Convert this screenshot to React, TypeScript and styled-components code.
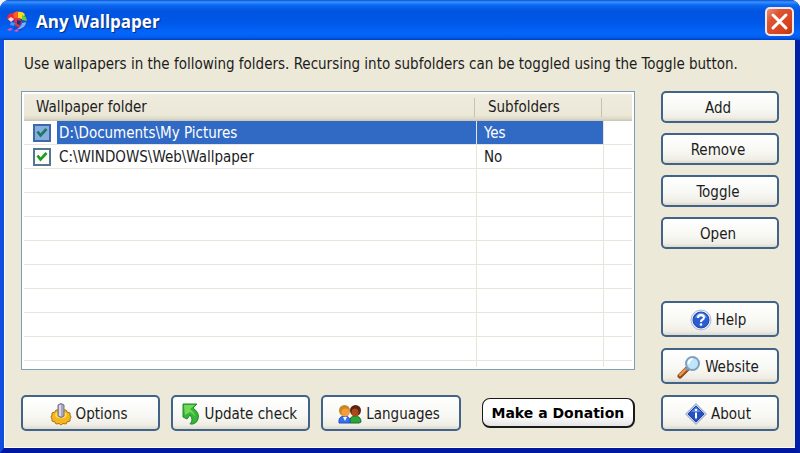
import React, { useState } from "react";
import styled, { createGlobalStyle, css } from "styled-components";

const ink = "#1c1c1c";
const face = "#ece9d8";
const uiFont = `"DejaVu Sans Condensed", "Noto Sans", sans-serif`;

const GlobalStyle = createGlobalStyle`
  *, *::before, *::after { box-sizing: border-box; }
  body { margin: 0; background: #f3f5ee; }
  button, input { font: inherit; color: inherit; }
`;

const Window = styled.main`
  min-height: 100vh;
  display: flex;
  flex-direction: column;
  border: solid;
  border-width: 0 5px 5px 4px;
  border-color: #0020a8 #0020a8 #0018a0 #0f4fe0;
  border-radius: 9px 9px 0 0;
  background: #0020a8;
  color: ${ink};
  font: 15px/20px ${uiFont};
`;

const TitleBar = styled.header`
  height: 40px;
  margin: 0 -5px 0 -4px;
  display: flex;
  align-items: center;
  gap: 7px;
  padding: 3px 6px 0 5px;
  border-radius: 9px 9px 0 0;
  background: linear-gradient(
    180deg,
    #0a50cf 0,
    #3b93ff 2px,
    #0a69f2 5px,
    #0054e0 11px,
    #0057e8 22px,
    #0466fb 33px,
    #0360f2 37px,
    #0040c4 40px
  );
`;

const Title = styled.h1`
  flex: 1;
  margin: 0;
  color: #fff;
  font: bold 17px/24px "Open Sans", "Noto Sans", sans-serif;
  text-shadow: 1px 1px 1px #0a2a80;
`;

const CloseButton = styled.button`
  width: 29px;
  height: 29px;
  padding: 0;
  display: grid;
  place-items: center;
  border: 2px solid #f1e8ee;
  border-radius: 5px;
  background: linear-gradient(135deg, #ee8d6c 0, #dd5433 30%, #d6421c 75%, #b83812 100%);
`;

const Client = styled.div`
  flex: 1;
  padding: 14px 16px 16px 16px;
  border: solid #f8fbff;
  border-width: 0 0 1px 1px;
  background: ${face};
`;

const Intro = styled.p`
  margin: 0 0 17px;
  padding-left: 3px;
`;

const Columns = styled.div`
  display: grid;
  grid-template-columns: 1fr 118px;
  gap: 26px;
`;

const Main = styled.section`
  display: flex;
  flex-direction: column;
  gap: 25px;
  min-width: 0;
`;

const Side = styled.aside`
  display: flex;
  flex-direction: column;
  justify-content: space-between;
`;

const Stack = styled.div<{ $gap: number }>`
  display: flex;
  flex-direction: column;
  gap: ${(p) => p.$gap}px;
`;

const ListFrame = styled.div`
  padding: 2px;
  border: 1px solid #7f9db9;
  background: #fff;
`;

const FolderTable = styled.table`
  width: 100%;
  table-layout: fixed;
  border-collapse: separate;
  border-spacing: 0;
`;

const FolderCol = styled.col``;
const SubfolderCol = styled.col`
  width: 127px;
`;
const SpareCol = styled.col`
  width: 28px;
`;

const HeadCell = styled.th`
  height: 27px;
  padding: 0;
  background: linear-gradient(180deg, #efecdf 0, #ebe8d8 21px, #dcd8c6 25px, #c9c5b4 27px);
  font-weight: normal;
  text-align: left;
`;

const HeadLabel = styled.div<{ $indent: number }>`
  margin-right: 2px;
  padding-left: ${(p) => p.$indent}px;
  border-right: 1px solid #c5c2b0;
  line-height: 19px;
`;

const Cell = styled.td<{ $short?: boolean }>`
  height: ${(p) => (p.$short ? 6 : 24)}px;
  padding: 0;
  border: solid #e8e6dc;
  border-width: 0 1px ${(p) => (p.$short ? 0 : 1)}px 0;
  &:last-child {
    border-right: 0;
  }
`;

const CellLine = styled.div`
  display: flex;
  align-items: center;
  gap: 6px;
  padding-left: 9px;
`;

const CellText = styled.div<{ $selected: boolean; $indent: number }>`
  flex: 1;
  padding-top: 2px;
  padding-left: ${(p) => p.$indent}px;
  line-height: 21px;
  white-space: nowrap;
  ${(p) =>
    p.$selected &&
    css`
      background: #316ac5;
      color: #fff;
    `}
`;

const Tick = styled.label<{ $selected: boolean }>`
  display: grid;
  width: 18px;
  height: 18px;
  > * {
    grid-area: 1 / 1;
  }
  input {
    appearance: none;
    width: 18px;
    height: 18px;
    margin: 0;
    border: 2px solid ${(p) => (p.$selected ? "#3d6aa6" : "#55768f")};
    background: ${(p) => (p.$selected ? "#88aede" : "#fbfdf8")};
  }
  svg {
    place-self: center;
    pointer-events: none;
    color: ${(p) => (p.$selected ? "#1d7868" : "#219b21")};
  }
  input:not(:checked) + svg {
    visibility: hidden;
  }
`;

const PushButton = styled.button<{ $tall?: boolean }>`
  height: ${(p) => (p.$tall ? 36 : 32)}px;
  display: flex;
  align-items: center;
  justify-content: center;
  gap: 4px;
  padding: 2px 4px 0 0;
  border: 2px solid #41638a;
  border-radius: 5px;
  background: linear-gradient(180deg, #fff 0, #f7f7f3 60%, #efede4 88%, #dcd8cc 100%);
  white-space: nowrap;
`;

const Footer = styled.div`
  display: grid;
  grid-template-columns: repeat(3, 139fr) 163fr;
  column-gap: 11px;
  align-items: center;
`;

const DonateButton = styled.button`
  height: 30px;
  margin-left: 10px;
  padding: 0;
  border: solid #1a1a1a;
  border-width: 1px 2px 2px 1px;
  border-radius: 8px;
  background: linear-gradient(180deg, #fff 60%, #e4e4e4 100%);
  color: #000;
  font: bold 14px/20px "DejaVu Sans", sans-serif;
  white-space: nowrap;
`;

const AppIcon = () => (
  <svg width="24" height="24" viewBox="0 0 24 24" aria-hidden="true">
    <path d="M6 9q3-7 11-6 6 2 5 9-1 7-8 9-5 0-6-4 6-1 4-4z" fill="#1b49c8" />
    <path d="M2 9q0-6 6-6l4 2-1 4-5 3z" fill="#e02a3c" />
    <path d="M8 4q3-4 6-2l-1 7-4-1z" fill="#ff5a1c" />
    <path d="M13 2q5-1 7 3l-3 4-4-1z" fill="#ffd91e" />
    <path d="M17 5l4 2 1 4-5-1z" fill="#63cd3c" />
    <path d="M9 9l5-1 3 4-3 6-4-3z" fill="#df3246" />
    <path d="M12 10l4 1-1 4-3-1z" fill="#16337f" />
    <path d="M3 9l3-2 3 2-3 3z" fill="#ffd5dc" />
    <path d="M6 12l4 1-1 3-4-1z" fill="#3d9bea" />
    <path d="M17 13l4-1q0 4-4 6-3 2-5 1 4-2 5-6z" fill="#70b4ff" />
    <path d="M2 20l3-2 3 1-3 2zM9 21l3-2 2 1-2 2z" fill="#d858b8" />
  </svg>
);

const CloseIcon = () => (
  <svg width="19" height="19" viewBox="0 0 19 19" aria-hidden="true">
    <path d="M3 3l13 13M16 3L3 16" stroke="#fff" strokeWidth="3" strokeLinecap="round" />
  </svg>
);

const TickIcon = () => (
  <svg width="12" height="12" viewBox="0 0 12 12" aria-hidden="true">
    <path d="M1.500 4.500L4.500 8.500L10.500 2" fill="none" stroke="currentColor" strokeWidth="2.700" />
  </svg>
);

const OptionsIcon = () => (
  <svg width="22" height="24" viewBox="0 0 22 24" aria-hidden="true">
    <path
      d="M2 11l3-1 1-2h10l1 2 3 1v2l1 2-1 2v2l-3 1-1 2-3-.5-2 1.500-2-1.500-3 .5-1-2-3-1v-2l-1-2 1-2z"
      fill="#f4b51f"
      stroke="#ad7115"
    />
    <ellipse cx="11" cy="13" rx="6" ry="3.500" fill="#ffdc4e" />
    <path d="M8 3q3-3 6 0v11q-3 3-6 0z" fill="#a9a6bd" stroke="#716e85" />
    <path d="M10 3v11" stroke="#e9e8f2" strokeWidth="1.500" />
  </svg>
);

const UpdateIcon = () => (
  <svg width="20" height="24" viewBox="0 0 20 24" aria-hidden="true">
    <path
      d="M2 2h14l-4 4q7 5 5 11-1 4-5 5H9q4-4 0-9l-3 4-4-2z"
      fill="#37b53a"
      stroke="#208a29"
      strokeLinejoin="round"
    />
    <path d="M3 3h11L9 7q5 4 5 8-2-4-5-5l-5 3z" fill="#73d957" />
  </svg>
);

const PeopleIcon = () => (
  <svg width="24" height="22" viewBox="0 0 24 22" aria-hidden="true">
    <path d="M12 20q-1-7 5-7 6 0 6 6l-2 1z" fill="#28a83a" stroke="#1a6c29" />
    <circle cx="17.500" cy="7.500" r="5.500" fill="#5b2311" />
    <ellipse cx="17" cy="9.500" rx="3.500" ry="4" fill="#a8481c" />
    <path d="M1 20q-1-7 6-7 5 0 5 6v1z" fill="#3672ef" stroke="#234fc0" />
    <path d="M5 14l2 4 2-4z" fill="#fff" />
    <circle cx="6.500" cy="7.500" r="5.500" fill="#c58920" />
    <ellipse cx="7.500" cy="9.500" rx="4" ry="4" fill="#f59c3c" />
  </svg>
);

const HelpIcon = () => (
  <svg width="22" height="22" viewBox="0 0 22 22" aria-hidden="true">
    <circle cx="11" cy="11" r="10" fill="#e9effa" stroke="#a9badb" />
    <circle cx="11" cy="11" r="8" fill="#2a5ed0" stroke="#2148a8" />
    <path d="M5 9q2-5 6-5t6 5q-6-2-12 0z" fill="#6f9df0" />
    <path d="M8 9q0-3 3-3 3 0 3 2.500 0 1.500-2 2.500-1 .5-1 2" fill="none" stroke="#fff" strokeWidth="2" />
    <circle cx="11" cy="15.500" r="1.300" fill="#fff" />
  </svg>
);

const MagnifierIcon = () => (
  <svg width="24" height="24" viewBox="0 0 24 24" aria-hidden="true">
    <path d="M3 21l7-7" stroke="#8f4a1a" strokeWidth="5" strokeLinecap="round" />
    <path d="M3 20l6-6" stroke="#ee9446" strokeWidth="2.500" strokeLinecap="round" />
    <path d="M9 15l3-3" stroke="#8495a8" strokeWidth="3" />
    <circle cx="15.500" cy="8.500" r="6.500" fill="#bfe5fa" stroke="#7e9fbe" strokeWidth="2" />
    <path d="M11.500 9q0-4 4-5" fill="none" stroke="#fff" strokeWidth="2" />
  </svg>
);

const AboutIcon = () => (
  <svg width="22" height="22" viewBox="0 0 22 22" aria-hidden="true">
    <path d="M11 1l10 10-10 10L1 11z" fill="#e6edfa" stroke="#a4b5d8" strokeWidth="1.500" strokeLinejoin="round" />
    <path d="M11 3l8 8-8 8-8-8z" fill="#2450c0" stroke="#1c3fa0" strokeLinejoin="round" />
    <path d="M11 4l5 5H6z" fill="#5c8ae6" />
    <path d="M11 6v2M11 9.500v6" stroke="#fff" strokeWidth="2" />
  </svg>
);

const initialFolders = [
  { path: "D:\\Documents\\My Pictures", subfolders: "Yes", selected: true, enabled: true },
  { path: "C:\\WINDOWS\\Web\\Wallpaper", subfolders: "No", selected: false, enabled: true },
];

const emptyRows = [0, 1, 2, 3, 4, 5, 6, 7, 8];

export default function App() {
  const [folders, setFolders] = useState(initialFolders);
  const toggle = (path: string) =>
    setFolders((list) => list.map((f) => (f.path === path ? { ...f, enabled: !f.enabled } : f)));

  return (
    <>
      <GlobalStyle />
      <Window>
        <TitleBar>
          <AppIcon />
          <Title>Any Wallpaper</Title>
          <CloseButton type="button" aria-label="Close">
            <CloseIcon />
          </CloseButton>
        </TitleBar>
        <Client>
          <Intro>
            Use wallpapers in the following folders. Recursing into subfolders can be toggled using the Toggle button.
          </Intro>
          <Columns>
            <Main>
              <ListFrame>
                <FolderTable>
                  <colgroup>
                    <FolderCol />
                    <SubfolderCol />
                    <SpareCol />
                  </colgroup>
                  <thead>
                    <tr>
                      <HeadCell scope="col">
                        <HeadLabel $indent={12}>Wallpaper folder</HeadLabel>
                      </HeadCell>
                      <HeadCell scope="col">
                        <HeadLabel $indent={11}>Subfolders</HeadLabel>
                      </HeadCell>
                      <HeadCell />
                    </tr>
                  </thead>
                  <tbody>
                    {folders.map((f) => (
                      <tr key={f.path} aria-selected={f.selected}>
                        <Cell>
                          <CellLine>
                            <Tick $selected={f.selected}>
                              <input
                                type="checkbox"
                                aria-label={f.path}
                                checked={f.enabled}
                                onChange={() => toggle(f.path)}
                              />
                              <TickIcon />
                            </Tick>
                            <CellText $selected={f.selected} $indent={2}>
                              {f.path}
                            </CellText>
                          </CellLine>
                        </Cell>
                        <Cell>
                          <CellText $selected={f.selected} $indent={7}>
                            {f.subfolders}
                          </CellText>
                        </Cell>
                        <Cell />
                      </tr>
                    ))}
                    {emptyRows.map((n) => (
                      <tr key={n}>
                        <Cell $short={n === 8} />
                        <Cell $short={n === 8} />
                        <Cell $short={n === 8} />
                      </tr>
                    ))}
                  </tbody>
                </FolderTable>
              </ListFrame>
              <Footer>
                <PushButton type="button" $tall>
                  <OptionsIcon />
                  Options
                </PushButton>
                <PushButton type="button" $tall>
                  <UpdateIcon />
                  Update check
                </PushButton>
                <PushButton type="button" $tall>
                  <PeopleIcon />
                  Languages
                </PushButton>
                <DonateButton type="button">Make a Donation</DonateButton>
              </Footer>
            </Main>
            <Side>
              <Stack $gap={10}>
                <PushButton type="button">Add</PushButton>
                <PushButton type="button">Remove</PushButton>
                <PushButton type="button">Toggle</PushButton>
                <PushButton type="button">Open</PushButton>
              </Stack>
              <Stack $gap={11}>
                <PushButton type="button" $tall>
                  <HelpIcon />
                  Help
                </PushButton>
                <PushButton type="button" $tall>
                  <MagnifierIcon />
                  Website
                </PushButton>
                <PushButton type="button" $tall>
                  <AboutIcon />
                  About
                </PushButton>
              </Stack>
            </Side>
          </Columns>
        </Client>
      </Window>
    </>
  );
}
